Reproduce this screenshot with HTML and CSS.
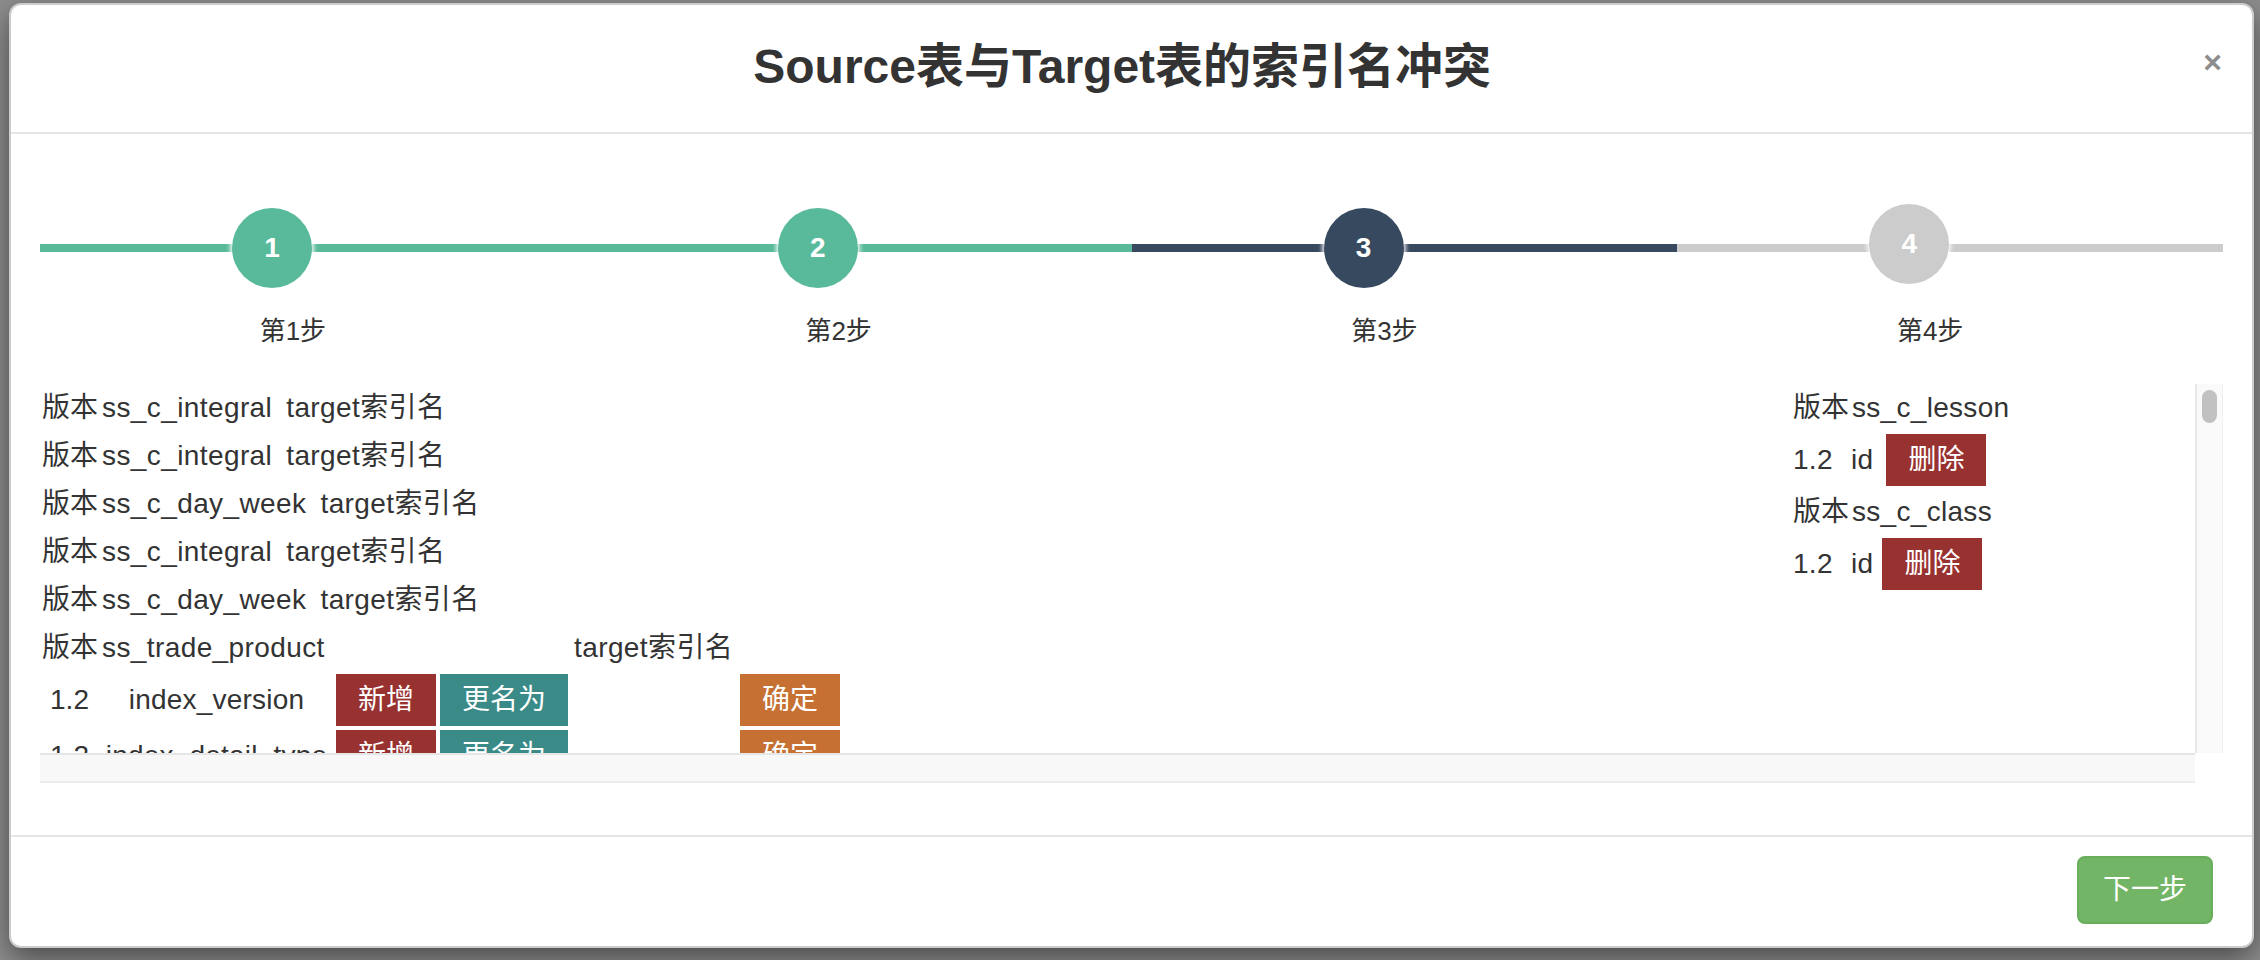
FILE: index.html
```html
<!DOCTYPE html>
<html lang="zh-CN">
<head>
<meta charset="utf-8">
<title>Source表与Target表的索引名冲突</title>
<link rel="stylesheet" href="styles.css">
</head>
<body>
<div class="modal">
  <div class="modal-header">
    <h4 class="modal-title">Source表与Target表的索引名冲突</h4>
    <button class="close" type="button">×</button>
  </div>
  <div class="modal-body">
    <div class="steps">
      <div class="step done">
        <div class="step-head"><span class="seg seg-left"></span><span class="dot">1</span><span class="seg seg-right"></span></div>
        <div class="step-label">第1步</div>
      </div>
      <div class="step done">
        <div class="step-head"><span class="seg seg-left"></span><span class="dot">2</span><span class="seg seg-right"></span></div>
        <div class="step-label">第2步</div>
      </div>
      <div class="step current">
        <div class="step-head"><span class="seg seg-left"></span><span class="dot">3</span><span class="seg seg-right"></span></div>
        <div class="step-label">第3步</div>
      </div>
      <div class="step todo">
        <div class="step-head"><span class="seg seg-left"></span><span class="dot">4</span><span class="seg seg-right"></span></div>
        <div class="step-label">第4步</div>
      </div>
    </div>
    <div class="scroll-frame">
      <div class="scroll">
        <div class="col-left">
          <div class="line"><span class="ver">版本</span><span class="tbl">ss_c_integral</span><span class="tgt">target索引名</span></div>
          <div class="line"><span class="ver">版本</span><span class="tbl">ss_c_integral</span><span class="tgt">target索引名</span></div>
          <div class="line"><span class="ver">版本</span><span class="tbl">ss_c_day_week</span><span class="tgt">target索引名</span></div>
          <div class="line"><span class="ver">版本</span><span class="tbl">ss_c_integral</span><span class="tgt">target索引名</span></div>
          <div class="line"><span class="ver">版本</span><span class="tbl">ss_c_day_week</span><span class="tgt">target索引名</span></div>
          <div class="line"><span class="ver">版本</span><span class="tbl tbl-wide">ss_trade_product</span><span class="tgt-col">target索引名</span></div>
          <div class="act-row">
            <span class="cell-ver">1.2</span><span class="cell-name">index_version</span>
            <button class="btn btn-red" type="button">新增</button>
            <button class="btn btn-teal" type="button">更名为</button>
            <input class="rename-input" type="text">
            <button class="btn btn-orange" type="button">确定</button>
          </div>
          <div class="act-row">
            <span class="cell-ver">1.2</span><span class="cell-name">index_detail_type</span>
            <button class="btn btn-red" type="button">新增</button>
            <button class="btn btn-teal" type="button">更名为</button>
            <input class="rename-input" type="text">
            <button class="btn btn-orange" type="button">确定</button>
          </div>
        </div>
        <div class="col-right">
          <div class="r-title"><span class="ver">版本</span><span class="tbl">ss_c_lesson</span></div>
          <div class="r-row"><span class="r-ver">1.2</span><span class="r-name">id</span><button class="btn btn-red btn-del" type="button">删除</button></div>
          <div class="r-title"><span class="ver">版本</span><span class="tbl">ss_c_class</span></div>
          <div class="r-row"><span class="r-ver">1.2</span><span class="r-name">id</span><button class="btn btn-red btn-del btn-del-2" type="button">删除</button></div>
        </div>
      </div>
      <div class="vbar"><div class="vthumb"></div></div>
      <div class="hbar"></div>
      <div class="corner"></div>
    </div>
  </div>
  <div class="modal-footer">
    <button class="btn-next" type="button">下一步</button>
  </div>
</div>
</body>
</html>
```

FILE: styles.css
```css
html, body {
  margin: 0;
  padding: 0;
  background: #8f8f8f;
}

body {
  font-family: "Liberation Sans", "Noto Sans CJK SC", sans-serif;
  color: #333;
  height: 960px;
  overflow: hidden;
}

.modal {
  box-sizing: border-box;
  width: 2245px;
  height: 945px;
  margin: 3px 0 0 9px;
  background: #fff;
  border: 2px solid rgba(0, 0, 0, 0.2);
  border-radius: 12px;
  box-shadow: 0 10px 30px rgba(0, 0, 0, 0.5);
  display: flex;
  flex-direction: column;
  overflow: hidden;
}

/* header */
.modal-header {
  display: flex;
  align-items: center;
  padding: 28px 30px 32px;
  border-bottom: 2px solid #e5e5e5;
}

.modal-title {
  flex: 1;
  margin: 0;
  text-align: center;
  font-size: 48px;
  font-weight: bold;
  line-height: 67px;
  color: #333;
}

.close {
  border: 0;
  background: none;
  padding: 0;
  font-family: "Liberation Sans", sans-serif;
  font-weight: bold;
  font-size: 32px;
  line-height: 1;
  color: #8c8c8c;
  margin-top: -10px;
}

/* body */
.modal-body {
  padding: 74px 29px 52px;
}

.steps {
  display: flex;
}

.step {
  flex: 1 1 0;
  min-width: 0;
}

.step-head {
  display: flex;
  height: 80px;
}

.seg {
  height: 8px;
  margin-top: 36px;
}

.seg-left {
  flex: none;
  width: 192px;
}

.seg-right {
  flex: 1;
}

.dot {
  flex: none;
  width: 80px;
  height: 80px;
  border-radius: 50%;
  color: #fff;
  font-weight: bold;
  font-size: 28px;
  line-height: 80px;
  text-align: center;
  box-shadow: 0 0 4px 2px rgba(255, 255, 255, 0.9);
  z-index: 1;
}

.step.done .seg,
.step.done .dot {
  background: #58b99b;
}

.step.current .seg,
.step.current .dot {
  background: #36495e;
}

.step.todo .seg,
.step.todo .dot {
  background: #cccccc;
}

.step.todo .dot {
  margin-top: -4px;
}

.step-label {
  margin-top: 23px;
  padding-right: 40px;
  text-align: center;
  font-size: 26px;
  line-height: 40px;
  color: #333;
}

/* scroll area with drawn scrollbars */
.scroll-frame {
  margin-top: 33px;
  display: grid;
  grid-template-columns: 1fr 28px;
  grid-template-rows: 369px 30px;
}

.scroll {
  display: flex;
  overflow: hidden;
  min-width: 0;
}

.vbar {
  box-sizing: border-box;
  background: #fafafa;
  border-left: 2px solid #e8e8e8;
  border-right: 1px solid #efefef;
  padding: 6px 5px 0 5px;
}

.vthumb {
  height: 33px;
  border-radius: 8px;
  background: #c1c1c1;
}

.hbar {
  box-sizing: border-box;
  background: #f8f8f8;
  border-top: 2px solid #e6e6e6;
  border-bottom: 2px solid #ebebeb;
}

.corner {
  background: #fff;
}

.col-left {
  flex: 1;
  min-width: 0;
  padding-left: 2px;
  font-size: 28px;
  letter-spacing: 0.4px;
  white-space: nowrap;
}

.ver {
  letter-spacing: 0;
}

.line {
  height: 48px;
  line-height: 48px;
}

.tbl {
  margin-left: 4px;
}

.tgt {
  margin-left: 14px;
}

.tbl-wide {
  display: inline-block;
  width: 472px;
}

.act-row {
  display: flex;
  align-items: center;
  height: 56px;
  letter-spacing: 0;
}

.cell-ver {
  width: 55px;
  text-align: center;
}

.cell-name {
  width: 239px;
  text-align: center;
  letter-spacing: 0.2px;
}

.btn {
  height: 52px;
  padding: 0 22px;
  border: 0;
  margin: 0;
  font-family: "Liberation Sans", "Noto Sans CJK SC", sans-serif;
  font-size: 28px;
  line-height: 52px;
  letter-spacing: 0;
  color: #fff;
  flex: none;
}

.btn-red {
  background: #983231;
}

.btn-teal {
  background: #3a8a88;
  margin-left: 4px;
}

.btn-orange {
  background: #c67034;
}

.rename-input {
  width: 172px;
  height: 52px;
  padding: 0;
  margin: 0;
  border: 0;
  background: transparent;
  box-sizing: border-box;
  font-size: 28px;
  outline: none;
}

.col-right {
  flex: none;
  width: 402px;
  margin-top: -2px;
  font-size: 28px;
  letter-spacing: 0.3px;
  white-space: nowrap;
}

.r-title {
  height: 52px;
  line-height: 52px;
}

.r-title .tbl {
  margin-left: 3px;
}

.r-row {
  display: flex;
  align-items: center;
  height: 52px;
}

.r-ver {
  width: 58px;
}

.btn-del {
  margin-left: 13px;
}

.btn-del-2 {
  margin-left: 9px;
}

/* footer */
.modal-footer {
  margin-top: auto;
  border-top: 2px solid #e5e5e5;
  padding: 19px 39px 22px;
  display: flex;
  justify-content: flex-end;
}

.btn-next {
  box-sizing: border-box;
  height: 68px;
  padding: 0 24px;
  border: 2px solid #67ad5a;
  border-radius: 8px;
  background: #73b566;
  color: #fff;
  font-family: "Liberation Sans", "Noto Sans CJK SC", sans-serif;
  font-size: 28px;
  line-height: 64px;
}
```
